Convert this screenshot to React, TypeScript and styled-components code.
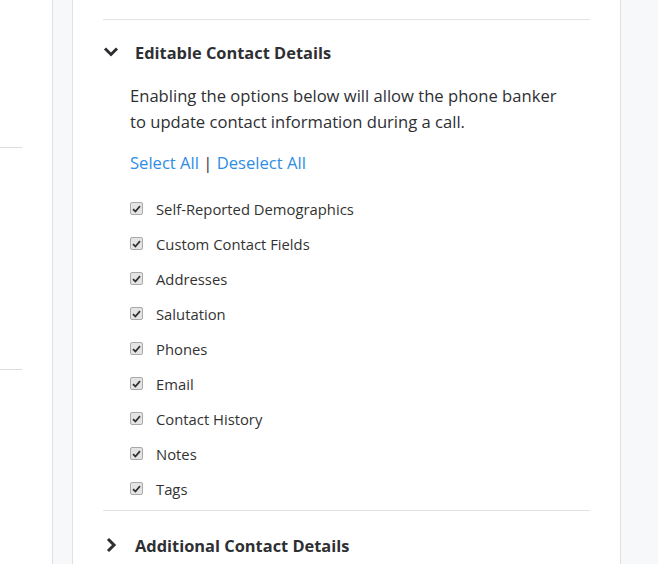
import * as React from 'react'
import styled, { createGlobalStyle } from 'styled-components'

const GlobalStyle = createGlobalStyle`
  html, body {
    margin: 0;
    padding: 0;
    height: 564px;
    overflow: hidden;
    background: #f7f8fa;
  }
  body {
    font-family: 'Open Sans', 'Noto Sans', sans-serif;
    color: #333;
  }
`

const Page = styled.div`
  display: flex;
  height: 564px;
`

const SidePanel = styled.div`
  width: 52px;
  background: #fff;
  padding-top: 147px;
  box-sizing: border-box;
`

const Stub = styled.div<{ gap?: number }>`
  width: 22px;
  height: 1px;
  background: #dcdde0;
  margin-top: ${p => p.gap || 0}px;
`

const Gutter = styled.div`
  width: 19px;
  background: #f7f8fa;
  border-left: 1px solid #dfe1e6;
  border-right: 1px solid #dfe1e6;
`

const Main = styled.div`
  width: 548px;
  background: #fff;
  border-right: 1px solid #dfe1e6;
  padding: 19px 30px 0;
  box-sizing: border-box;
`

const Divider = styled.hr`
  border: 0;
  height: 1px;
  background: #e2e3e6;
  margin: 0;
`

const SectionHeader = styled.div<{ open?: boolean }>`
  display: flex;
  align-items: center;
  height: ${p => (p.open ? 62 : 68)}px;
  padding-top: ${p => (p.open ? 1 : 0)}px;
  gap: 16px;
`

const Chevron = styled.svg`
  width: 16px;
  height: 16px;
  flex: none;
`

const Title = styled.h2`
  margin: 0;
  font-size: 16.4px;
  font-weight: 700;
  color: #2e2f33;
`

const Body = styled.div`
  padding-left: 27px;
`

const Intro = styled.p`
  margin: 0;
  font-size: 16.6px;
  line-height: 26px;
  color: #2e2f33;
`

const LinkRow = styled.div`
  margin-top: 15px;
  font-size: 16.6px;
  line-height: 26px;
  color: #333;
`

const Link = styled.a`
  color: #2f8de4;
  text-decoration: none;
`

const List = styled.ul`
  list-style: none;
  margin: 15px 0 4px;
  padding: 0 0 0 1px;
`

const Item = styled.li`
  display: flex;
  align-items: center;
  height: 35px;
  gap: 13px;
  font-size: 14.8px;
  font-weight: 500;
  color: #333;
`

const Box = styled.span`
  width: 13px;
  height: 13px;
  box-sizing: border-box;
  border: 1px solid #a9a9a9;
  border-radius: 2px;
  background: #e4e4e4;
  display: flex;
  align-items: center;
  justify-content: center;
  margin-left: -1px;
`

const Check = () => (
  <svg width="9" height="8" viewBox="0 0 9 8">
    <path d="M1 4.2 L3.4 6.5 L8 1.2" fill="none" stroke="#333" strokeWidth="1.8" />
  </svg>
)

const ChevronDown = () => (
  <Chevron viewBox="0 0 16 16">
    <path d="M2 4.5 L8 10.5 L14 4.5" fill="none" stroke="#2e2f33" strokeWidth="3" />
  </Chevron>
)

const ChevronRight = () => (
  <Chevron viewBox="0 0 16 16">
    <path d="M5 2 L11 8 L5 14" fill="none" stroke="#2e2f33" strokeWidth="3" />
  </Chevron>
)

const fields = [
  'Self-Reported Demographics',
  'Custom Contact Fields',
  'Addresses',
  'Salutation',
  'Phones',
  'Email',
  'Contact History',
  'Notes',
  'Tags',
]

const App = () => {
  return (
    <Page>
      <GlobalStyle />
      <SidePanel>
        <Stub />
        <Stub gap={221} />
      </SidePanel>
      <Gutter />
      <Main>
        <Divider />
        <SectionHeader open>
          <ChevronDown />
          <Title>Editable Contact Details</Title>
        </SectionHeader>
        <Body>
          <Intro>
            Enabling the options below will allow the phone banker
            <br />
            to update contact information during a call.
          </Intro>
          <LinkRow>
            <Link href="#">Select All</Link> | <Link href="#">Deselect All</Link>
          </LinkRow>
          <List>
            {fields.map(f => (
              <Item key={f}>
                <Box><Check /></Box>
                {f}
              </Item>
            ))}
          </List>
        </Body>
        <Divider />
        <SectionHeader>
          <ChevronRight />
          <Title>Additional Contact Details</Title>
        </SectionHeader>
      </Main>
    </Page>
  )
}

export default App
